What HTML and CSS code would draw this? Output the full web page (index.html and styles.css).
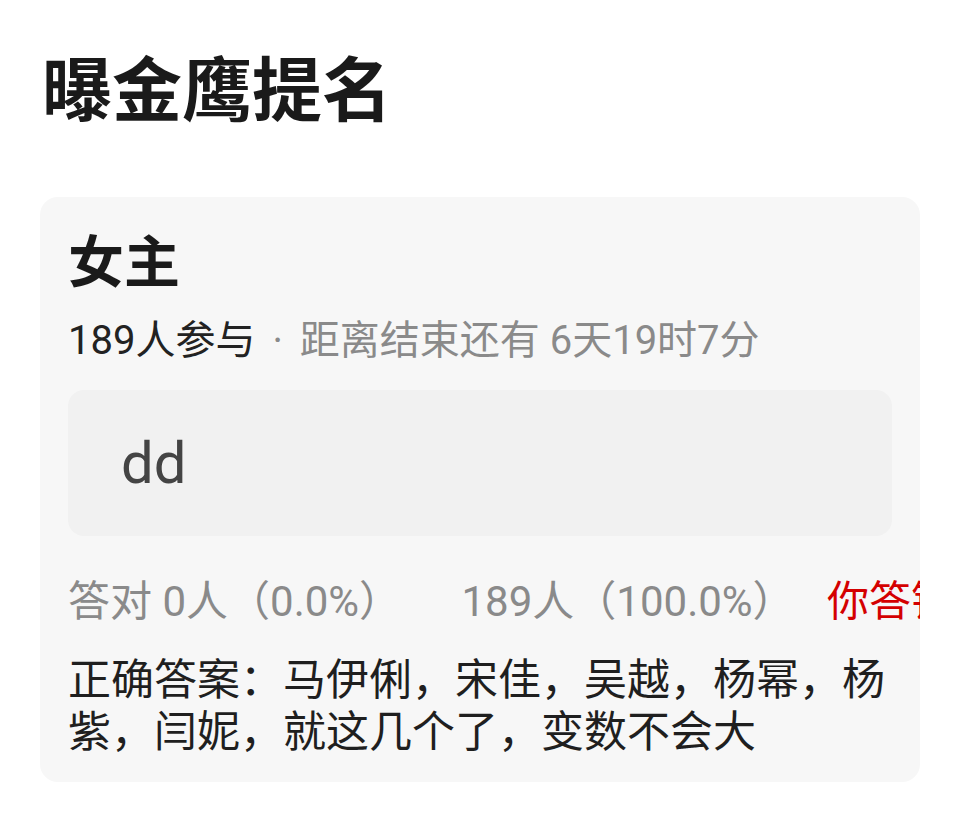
FILE: index.html
```html
<!DOCTYPE html>
<html lang="zh-CN">
<head>
    <meta charset="UTF-8">
    <meta name="viewport" content="width=device-width, initial-scale=1.0">
    <title>曝金鹰提名</title>
    <link rel="stylesheet" href="styles.css">
</head>
<body>
    <div class="page">
        <h1 class="page-title">曝金鹰提名</h1>

        <div class="quiz-card">
            <h2 class="quiz-title">女主</h2>
            <div class="quiz-meta">
                <span class="joined">189人参与</span>
                <span class="dot">·</span>
                <span>距离结束还有 6天19时7分</span>
            </div>

            <div class="answer-box">dd</div>

            <div class="stats">
                <span class="stat right">答对 0人（0.0%）</span>
                <span class="stat">189人（100.0%）</span>
                <span class="stat wrong">你答错了</span>
            </div>

            <p class="correct">正确答案：马伊俐，宋佳，吴越，杨幂，杨紫，闫妮，就这几个了，变数不会大</p>
        </div>
    </div>
</body>
</html>
```

FILE: styles.css
```css
body {
    margin: 0;
    background-color: #fff;
    color: #1a1a1a;
    font-family: Roboto, "Noto Sans CJK SC", sans-serif;
}
.page {
    padding: 42px 40px 40px 40px;
}
.page-title {
    margin: 0 0 55px 2px;
    font-size: 70px;
    line-height: 100px;
    font-weight: bold;
    color: #1a1a1a;
}
.quiz-card {
    background-color: #f7f7f7;
    border-radius: 18px;
    padding: 26px 28px 24px 28px;
    overflow: hidden;
}
.quiz-title {
    margin: 0;
    font-size: 56px;
    line-height: 80px;
    font-weight: bold;
}
.quiz-meta {
    font-size: 40px;
    line-height: 56px;
    color: #8a8a8a;
    margin-top: 10px;
}
.quiz-meta .joined {
    color: #222;
}
.quiz-meta .dot {
    margin: 0 7px;
}
.answer-box {
    background-color: #f1f1f1;
    border-radius: 16px;
    margin-top: 21px;
    height: 146px;
    padding-left: 53px;
    font-size: 58px;
    line-height: 146px;
    color: #444;
}
/* the row runs past the card edge and gets clipped there */
.stats {
    margin-top: 36px;
    margin-right: -28px;
    font-size: 42px;
    line-height: 60px;
    color: #8a8a8a;
    white-space: nowrap;
    overflow: hidden;
}
.stat {
    margin-right: 22px;
}
.stat.right {
    margin-right: 50px;
}
.stat.wrong {
    color: #d40000;
}
.correct {
    margin: 22px 0 0 0;
    font-size: 43px;
    line-height: 52px;
    color: #1f1f1f;
}
```
